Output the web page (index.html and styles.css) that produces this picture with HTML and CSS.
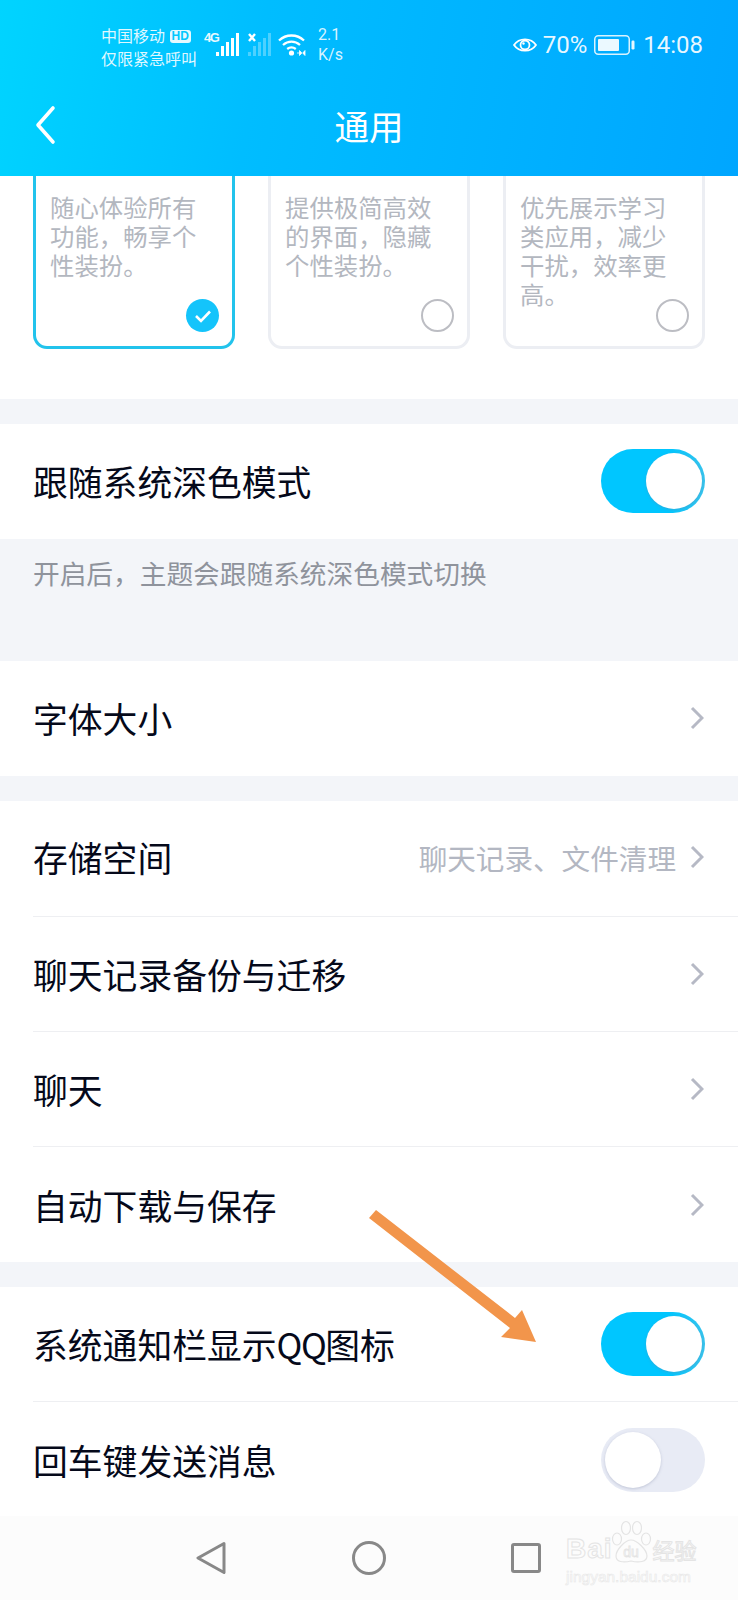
FILE: index.html
```html
<!DOCTYPE html>
<html lang="zh-CN">
<head>
  <meta charset="UTF-8" />
  <meta name="viewport" content="width=device-width, initial-scale=1.0"/>
  <title>通用</title>
  <link rel="stylesheet" href="styles.css">
</head>
<body>
<div class="page">

  <header class="header">
    <div class="statusbar">
      <div class="carrier">
        <div class="carrier-line">中国移动 <span class="hd">HD</span></div>
        <div class="carrier-line">仅限紧急呼叫</div>
      </div>
      <div class="net">
        <span class="net-type">4G</span>
        <svg class="signal" width="24" height="23" viewBox="0 0 24 23">
          <rect x="0" y="19" width="3" height="4" fill="#fff"/>
          <rect x="5" y="13" width="3" height="10" fill="#fff"/>
          <rect x="10" y="9" width="3" height="14" fill="#fff"/>
          <rect x="15" y="5" width="3" height="18" fill="#fff"/>
          <rect x="20" y="0" width="3" height="23" fill="#fff"/>
        </svg>
        <svg class="signal-off" width="24" height="23" viewBox="0 0 24 23">
          <path d="M1 1l6 7M7 1l-6 7" stroke="#fff" stroke-width="2.400" fill="none"/>
          <rect x="0" y="19" width="3" height="4" fill="#fff" opacity=".3"/>
          <rect x="5" y="13" width="3" height="10" fill="#fff" opacity=".3"/>
          <rect x="10" y="9" width="3" height="14" fill="#fff" opacity=".3"/>
          <rect x="15" y="5" width="3" height="18" fill="#fff" opacity=".3"/>
          <rect x="20" y="0" width="3" height="23" fill="#fff" opacity=".3"/>
        </svg>
        <svg class="wifi" width="28" height="23" viewBox="0 0 28 23">
          <path d="M1 7.500C8 .8 19 .8 26 7.500M5 12c5-4.400 12-4.400 17 0M9.200 16c2.800-2.200 5.800-2.200 8.600 0" stroke="#fff" stroke-width="2.300" fill="none"/>
          <circle cx="13.500" cy="20" r="2.600" fill="#fff"/>
          <path d="M19 20h2.500M21.500 17.500v5l2.300-2.500zM27 17.500v5l-2.300-2.500z" stroke="#fff" stroke-width=".8" fill="#fff"/>
        </svg>
        <div class="speed"><div>2.1</div><div>K/s</div></div>
      </div>
      <div class="status-right">
        <svg class="eye" width="24" height="18" viewBox="0 0 24 18">
          <path d="M1 9C6 1.500 18 1.500 23 9 18 16.500 6 16.500 1 9z" stroke="#fff" stroke-width="1.800" fill="none"/>
          <circle cx="12" cy="9" r="4.500" stroke="#fff" stroke-width="1.800" fill="none"/>
          <circle cx="10.500" cy="7.500" r="1.200" fill="#fff"/>
        </svg>
        <span class="pct">70%</span>
        <svg class="battery" width="41" height="20" viewBox="0 0 41 20">
          <rect x=".75" y=".75" width="34.500" height="18.500" rx="3.500" stroke="#fff" stroke-width="1.500" fill="none" opacity=".85"/>
          <rect x="4" y="4" width="21" height="12" rx="1" fill="#fff" opacity=".92"/>
          <rect x="37.500" y="5.500" width="3" height="9" rx="1.200" fill="#fff" opacity=".9"/>
        </svg>
        <span class="clock">14:08</span>
      </div>
    </div>
    <div class="navbar">
      <svg class="back" width="22" height="40" viewBox="0 0 22 40">
        <path d="M19 3L4 20l15 17" stroke="#fff" stroke-width="3.600" fill="none" stroke-linecap="round" stroke-linejoin="round"/>
      </svg>
      <div class="title">通用</div>
      <div></div>
    </div>
  </header>

  <main class="content">
    <section class="themes">
      <div class="card card-active">
        <p class="card-text">随心体验所有功能，畅享个性装扮。</p>
        <span class="radio radio-on">
          <svg width="33" height="33" viewBox="0 0 33 33">
            <path d="M10 17l5 5 9-9.500" stroke="#fff" stroke-width="2.600" fill="none"/>
          </svg>
        </span>
      </div>
      <div class="card">
        <p class="card-text">提供极简高效的界面，隐藏个性装扮。</p>
        <span class="radio"></span>
      </div>
      <div class="card">
        <p class="card-text">优先展示学习类应用，减少干扰，效率更高。</p>
        <span class="radio"></span>
      </div>
    </section>

    <div class="band"></div>
    <div class="row row-up">
      <span>跟随系统深色模式</span>
      <span class="switch switch-on"><span class="knob"></span></span>
    </div>
    <div class="note">开启后，主题会跟随系统深色模式切换</div>

    <div class="row row-up">
      <span>字体大小</span>
      <svg class="chevron" width="14" height="24" viewBox="0 0 14 24"><path d="M2 2l10 10L2 22" /></svg>
    </div>

    <div class="band"></div>
    <div class="row row-line row-tall">
      <span>存储空间</span>
      <span class="row-right">
        <span class="row-value">聊天记录、文件清理</span>
        <svg class="chevron" width="14" height="24" viewBox="0 0 14 24"><path d="M2 2l10 10L2 22" /></svg>
      </span>
    </div>
    <div class="row row-line">
      <span>聊天记录备份与迁移</span>
      <svg class="chevron" width="14" height="24" viewBox="0 0 14 24"><path d="M2 2l10 10L2 22" /></svg>
    </div>
    <div class="row row-line">
      <span>聊天</span>
      <svg class="chevron" width="14" height="24" viewBox="0 0 14 24"><path d="M2 2l10 10L2 22" /></svg>
    </div>
    <div class="row">
      <span>自动下载与保存</span>
      <svg class="chevron" width="14" height="24" viewBox="0 0 14 24"><path d="M2 2l10 10L2 22" /></svg>
    </div>

    <div class="band"></div>
    <div class="row row-line">
      <span>系统通知栏显示<span class="latin">QQ</span>图标</span>
      <span class="switch switch-on"><span class="knob"></span></span>
    </div>
    <div class="row">
      <span>回车键发送消息</span>
      <span class="switch"><span class="knob"></span></span>
    </div>
  </main>

  <nav class="bottom-nav">
    <svg width="30" height="34" viewBox="0 0 30 34">
      <path d="M28 2.500L2 17l26 14.500z" stroke="#888" stroke-width="3" fill="none" stroke-linejoin="round"/>
    </svg>
    <svg width="34" height="34" viewBox="0 0 34 34">
      <circle cx="17" cy="17" r="15.500" stroke="#888" stroke-width="3" fill="none"/>
    </svg>
    <svg width="30" height="30" viewBox="0 0 30 30">
      <rect x="1.500" y="1.500" width="27" height="27" rx="1.500" stroke="#888" stroke-width="3" fill="none"/>
    </svg>
  </nav>

  <!-- annotation drawn over the screenshot -->
  <svg class="arrow" width="180" height="145" viewBox="0 0 180 145">
    <path d="M3 9L10 1 149 109 156 101 170 133 135 128 144 119z" fill="#f2954b"/>
  </svg>

  <div class="watermark">
    <div class="wm-logo">
      <span class="wm-bai">Bai</span>
      <svg width="42" height="44" viewBox="0 0 42 44">
        <g fill="none" stroke="#e4e4e4" stroke-width="1.200">
          <ellipse cx="7" cy="19" rx="4.500" ry="6"/>
          <ellipse cx="16" cy="8" rx="4.500" ry="6.500"/>
          <ellipse cx="27" cy="8" rx="4.500" ry="6.500"/>
          <ellipse cx="36" cy="19" rx="4.500" ry="6"/>
          <path d="M21 20c-6 0-15 10-15 16 0 6 7 7 15 5 8 2 16 1 16-5 0-6-10-16-16-16z"/>
        </g>
        <text x="21" y="37" text-anchor="middle" class="wm-du">du</text>
      </svg>
      <span class="wm-cn">经验</span>
    </div>
    <div class="wm-url">jingyan.baidu.com</div>
  </div>

</div>
</body>
</html>
```

FILE: styles.css
```css
* {
  box-sizing: border-box;
}

body {
  margin: 0;
  font-family: "Noto Sans CJK SC", "Noto Sans", sans-serif;
  background: #fff;
}

.page {
  position: relative;
  width: 738px;
  height: 1600px;
  display: flex;
  flex-direction: column;
  overflow: hidden;
}

/* header */

.header {
  flex: none;
  height: 176px;
  color: #fff;
  background: linear-gradient(100deg, #00d4ff 0%, #00bdff 35%, #00a6ff 100%);
}

.statusbar {
  height: 92px;
  padding: 24px 35px 0 101px;
  display: flex;
  align-items: flex-start;
}

.carrier {
  width: 103px;
  font-size: 16px;
  line-height: 23px;
  color: rgba(255, 255, 255, 0.88);
}

.carrier-line {
  white-space: nowrap;
}

.hd {
  display: inline-block;
  height: 13px;
  padding: 0 2px;
  margin-left: 1px;
  border-radius: 3px;
  background: rgba(255, 255, 255, 0.9);
  color: #00c8ff;
  font: bold 12px/13px "Liberation Sans", sans-serif;
  vertical-align: 2px;
}

.net {
  display: flex;
  align-items: flex-start;
}

.net-type {
  width: 12px;
  margin-top: 8px;
  font: bold 13px/12px "Liberation Sans Narrow", "Liberation Sans", sans-serif;
  letter-spacing: -1.500px;
  color: rgba(255, 255, 255, 0.92);
}

.signal {
  margin-top: 9px;
}

.signal-off {
  margin: 9px 0 0 8px;
}

.wifi {
  margin: 9px 0 0 6px;
}

.speed {
  margin: 1px 0 0 12px;
  font: 16px/20px Roboto, sans-serif;
  color: rgba(255, 255, 255, 0.85);
}

.status-right {
  margin-left: auto;
  margin-top: 7px;
  display: flex;
  align-items: center;
  font: 24px/28px Roboto, sans-serif;
  color: rgba(255, 255, 255, 0.92);
}

.eye {
  margin-right: -1px;
}

.pct {
  margin-left: 7px;
}

.battery {
  margin-left: 7px;
}

.clock {
  margin-left: 8px;
}

.navbar {
  height: 66px;
  padding: 0 34px;
  display: grid;
  grid-template-columns: 1fr auto 1fr;
  align-items: center;
}

.title {
  font-size: 34.500px;
  line-height: 46px;
}

/* theme cards */

.content {
  flex: 1;
  min-height: 0;
  overflow: hidden;
}

.themes {
  height: 223px;
  padding: 0 33px 50px;
  display: grid;
  grid-template-columns: repeat(3, 202px);
  gap: 33px;
}

.card {
  position: relative;
  padding: 16px 14px 0;
  border: 3px solid #eceef3;
  border-top: none;
  border-radius: 0 0 14px 14px;
}

.card-active {
  border-color: #22c3ec;
}

.card-text {
  margin: 0;
  width: 148px;
  font-size: 24.400px;
  line-height: 29px;
  color: #b3b7bf;
}

.radio {
  position: absolute;
  right: 13px;
  bottom: 14px;
  width: 33px;
  height: 33px;
  border: 2px solid #bcbdc3;
  border-radius: 50%;
}

.radio-on {
  border: none;
  background: #14c4fb;
}

.radio-on svg {
  display: block;
}

/* list rows */

.band {
  height: 25px;
  background: #f3f5f9;
}

.note {
  height: 122px;
  padding: 16px 33px 0;
  background: #f3f5f9;
  font-size: 26.700px;
  line-height: 36px;
  color: #8f939c;
}

.row {
  height: 115px;
  margin-left: 33px;
  padding-right: 33px;
  display: flex;
  align-items: center;
  justify-content: space-between;
  font-size: 34.800px;
  color: #05091a;
}

.row-up {
  padding-bottom: 2px;
}

.row-tall {
  height: 116px;
  padding-bottom: 3px;
}

.row-line {
  border-bottom: 1px solid #eeeff2;
}

.row-right {
  display: flex;
  align-items: center;
  gap: 14px;
}

.row-value {
  font-size: 28.600px;
  color: #b3b7c2;
}

.latin {
  letter-spacing: -1.500px;
}

.chevron {
  margin-right: 1px;
  fill: none;
  stroke: #b6b9c5;
  stroke-width: 3;
}

/* switches */

.switch {
  display: flex;
  justify-content: flex-start;
  align-items: center;
  width: 104px;
  height: 64px;
  padding: 0 4px;
  border-radius: 32px;
  background: #e8ebf5;
}

.switch-on {
  justify-content: flex-end;
  padding: 0 3px;
  background: linear-gradient(90deg, #00c6ff 65%, #35c4ee 100%);
}

.knob {
  width: 56px;
  height: 56px;
  border-radius: 50%;
  background: #fff;
  box-shadow: 0 1px 3px rgba(120, 130, 160, 0.35);
}

/* bottom navigation */

.bottom-nav {
  flex: none;
  height: 84px;
  padding: 25px 197px 0 196px;
  display: flex;
  align-items: flex-start;
  justify-content: space-between;
  background: #fcfcfc;
}

.bottom-nav svg:last-child {
  margin-top: 2px;
}

.arrow {
  position: absolute;
  left: 366px;
  top: 1209px;
}

.watermark {
  position: absolute;
  left: 566px;
  top: 1520px;
  width: 136px;
  color: transparent;
  -webkit-text-stroke: 1px #e4e4e4;
}

.wm-logo {
  display: flex;
  align-items: flex-end;
  height: 44px;
  font: bold 28px/30px "Liberation Sans", sans-serif;
}

.wm-bai {
  letter-spacing: 1px;
}

.wm-logo svg {
  margin-left: -3px;
  flex: none;
}

.wm-du {
  font: 14px "Liberation Sans", sans-serif;
  fill: none;
  stroke: #e4e4e4;
  stroke-width: 0.8;
}

.wm-cn {
  margin-left: 1px;
  font: 22px/30px "Noto Sans CJK SC", sans-serif;
}

.wm-url {
  margin-top: 4px;
  font: 15.500px/18px "Liberation Sans", sans-serif;
  -webkit-text-stroke: 0.6px #e8e8e8;
  white-space: nowrap;
}
```
